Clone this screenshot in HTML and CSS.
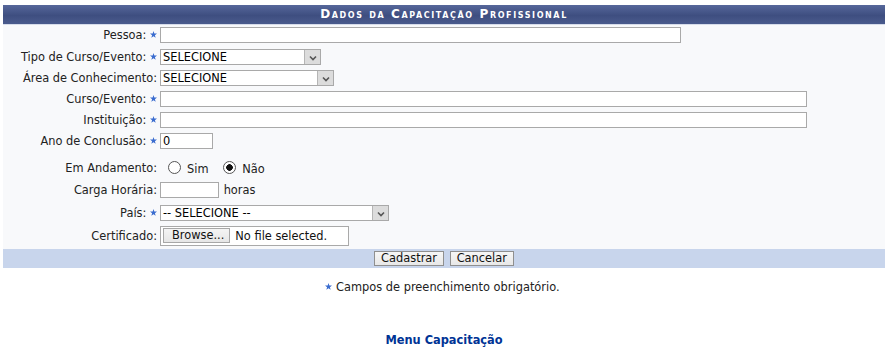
FILE: index.html
```html
<!DOCTYPE html>
<html lang="pt-BR">
<head>
<meta charset="utf-8">
<title>Dados da Capacitação Profissional</title>
<link rel="stylesheet" href="styles.css">
</head>
<body>
<div class="page">
  <table class="formulario">
    <colgroup><col class="c-label"><col></colgroup>
    <thead>
      <tr><th colspan="2" class="titulo">Dados da Capacitação Profissional</th></tr>
    </thead>
    <tbody>
      <tr class="r22">
        <th>Pessoa: <span class="req"><svg viewBox="0 0 10 10" width="7" height="7"><polygon points="5,0 6.2,3.6 10,3.6 7,5.9 8.1,9.6 5,7.4 1.9,9.6 3,5.9 0,3.6 3.8,3.6" fill="#3a6ccf"/></svg></span></th>
        <td><input type="text" class="txt w-pessoa"></td>
      </tr>
      <tr class="r21">
        <th>Tipo de Curso/Evento: <span class="req"><svg viewBox="0 0 10 10" width="7" height="7"><polygon points="5,0 6.2,3.6 10,3.6 7,5.9 8.1,9.6 5,7.4 1.9,9.6 3,5.9 0,3.6 3.8,3.6" fill="#3a6ccf"/></svg></span></th>
        <td><span class="sel w-tipo"><select><option>SELECIONE</option></select><span class="arr"><svg viewBox="0 0 8 6" width="8" height="6"><path d="M1 1.5 L4 4.5 L7 1.5" fill="none" stroke="#555" stroke-width="1.6"/></svg></span></span></td>
      </tr>
      <tr class="r21">
        <th>Área de Conhecimento:</th>
        <td><span class="sel w-area"><select><option>SELECIONE</option></select><span class="arr"><svg viewBox="0 0 8 6" width="8" height="6"><path d="M1 1.5 L4 4.5 L7 1.5" fill="none" stroke="#555" stroke-width="1.6"/></svg></span></span></td>
      </tr>
      <tr class="r21">
        <th>Curso/Evento: <span class="req"><svg viewBox="0 0 10 10" width="7" height="7"><polygon points="5,0 6.2,3.6 10,3.6 7,5.9 8.1,9.6 5,7.4 1.9,9.6 3,5.9 0,3.6 3.8,3.6" fill="#3a6ccf"/></svg></span></th>
        <td><input type="text" class="txt w-curso"></td>
      </tr>
      <tr class="r21">
        <th>Instituição: <span class="req"><svg viewBox="0 0 10 10" width="7" height="7"><polygon points="5,0 6.2,3.6 10,3.6 7,5.9 8.1,9.6 5,7.4 1.9,9.6 3,5.9 0,3.6 3.8,3.6" fill="#3a6ccf"/></svg></span></th>
        <td><input type="text" class="txt w-curso"></td>
      </tr>
      <tr class="r21">
        <th>Ano de Conclusão: <span class="req"><svg viewBox="0 0 10 10" width="7" height="7"><polygon points="5,0 6.2,3.6 10,3.6 7,5.9 8.1,9.6 5,7.4 1.9,9.6 3,5.9 0,3.6 3.8,3.6" fill="#3a6ccf"/></svg></span></th>
        <td><input type="text" class="txt w-ano" value="0"></td>
      </tr>
      <tr class="r-radio">
        <th>Em Andamento:</th>
        <td>
          <label class="opt"><input type="radio" name="and" class="rad"> Sim</label>
          <label class="opt"><input type="radio" name="and" class="rad" checked> Não</label>
        </td>
      </tr>
      <tr class="r22">
        <th>Carga Horária:</th>
        <td><input type="text" class="txt w-carga"> <span class="unid">horas</span></td>
      </tr>
      <tr class="r23">
        <th>País: <span class="req"><svg viewBox="0 0 10 10" width="7" height="7"><polygon points="5,0 6.2,3.6 10,3.6 7,5.9 8.1,9.6 5,7.4 1.9,9.6 3,5.9 0,3.6 3.8,3.6" fill="#3a6ccf"/></svg></span></th>
        <td><span class="sel w-pais"><select><option>-- SELECIONE --</option></select><span class="arr"><svg viewBox="0 0 8 6" width="8" height="6"><path d="M1 1.5 L4 4.5 L7 1.5" fill="none" stroke="#555" stroke-width="1.6"/></svg></span></span></td>
      </tr>
      <tr class="r-file">
        <th>Certificado:</th>
        <td><span class="file"><span class="browse">Browse...</span><span class="nofile">No file selected.</span></span></td>
      </tr>
    </tbody>
    <tfoot>
      <tr>
        <td colspan="2" class="acoes">
          <button type="button" class="btn">Cadastrar</button>
          <button type="button" class="btn">Cancelar</button>
        </td>
      </tr>
    </tfoot>
  </table>

  <p class="obrig"><span class="req"><svg viewBox="0 0 10 10" width="7" height="7"><polygon points="5,0 6.2,3.6 10,3.6 7,5.9 8.1,9.6 5,7.4 1.9,9.6 3,5.9 0,3.6 3.8,3.6" fill="#3a6ccf"/></svg></span> Campos de preenchimento obrigatório.</p>

  <p class="menu"><a href="#">Menu Capacitação</a></p>
</div>
</body>
</html>
```

FILE: styles.css
```css
* { box-sizing: border-box; }

html, body {
  margin: 0;
  padding: 0;
  background: #fff;
}

body {
  font-family: "DejaVu Sans", Verdana, sans-serif;
  font-size: 11.4px;
  color: #222;
}

.page {
  padding: 5px 5px 0 3px;
}

.formulario {
  width: 882px;
  border-collapse: collapse;
  table-layout: fixed;
  background: #f8f9fb;
}

.c-label { width: 156px; }

.titulo {
  height: 19px;
  padding: 0;
  background: linear-gradient(#56679a, #3e4e80 55%, #4a5b8d);
  color: #fff;
  font-weight: bold;
  font-variant: small-caps;
  letter-spacing: 1.6px;
  font-size: 12px;
  text-align: center;
  border-bottom: 1px solid #d6dcea;
}

tbody th {
  font-weight: normal;
  text-align: right;
  padding: 0 2px 0 0;
  white-space: nowrap;
  vertical-align: middle;
}

tbody td {
  padding: 0 0 0 1px;
  vertical-align: middle;
  white-space: nowrap;
}

.r21 { height: 21px; }
.r22 { height: 22px; }
.r23 { height: 23px; }
.r-radio { height: 28px; }
.r-radio th, .r-radio td { padding-top: 5px; }
.r-file { height: 24px; }

.req {
  display: inline-block;
  width: 7px;
  height: 7px;
  line-height: 0;
  vertical-align: 1px;
}

.txt {
  height: 16px;
  border: 1px solid #a9a9a9;
  background: #fff;
  font: 11.4px "DejaVu Sans", Verdana, sans-serif;
  color: #000;
  padding: 0 2px;
  margin: 0;
  vertical-align: middle;
}

.w-pessoa { width: 521px; }
.w-curso { width: 647px; }
.w-ano { width: 53px; }
.w-carga { width: 59px; }

.sel {
  display: inline-flex;
  height: 16px;
  border: 1px solid #a9a9a9;
  background: #fff;
  vertical-align: middle;
}

.sel select {
  appearance: none;
  -webkit-appearance: none;
  border: 0;
  background: transparent;
  flex: 1;
  min-width: 0;
  height: 14px;
  padding: 0 0 0 2px;
  margin: 0;
  font: 11.4px "DejaVu Sans", Verdana, sans-serif;
  color: #000;
  outline: none;
}

.sel .arr {
  width: 16px;
  height: 14px;
  background: #dcdcdc;
  border-left: 1px solid #b5b5b5;
  display: flex;
  align-items: center;
  justify-content: center;
  padding-top: 2px;
}

.w-tipo { width: 161px; }
.w-area { width: 174px; }
.w-pais { width: 229px; }

.opt {
  display: inline-flex;
  align-items: center;
  margin-left: 8px;
  margin-right: 3px;
  padding-top: 3px;
}

.rad {
  appearance: none;
  -webkit-appearance: none;
  width: 13px;
  height: 13px;
  margin: -3px 6px 0 0;
  border: 1px solid #555;
  border-radius: 50%;
  background: #fff;
}

.rad:checked {
  background: radial-gradient(circle, #111 0 3px, #fff 3.6px);
}

.unid { margin-left: 1px; }

.file {
  display: inline-flex;
  align-items: center;
  width: 189px;
  height: 20px;
  border: 1px solid #a9a9a9;
  background: #fff;
  padding-left: 2px;
  vertical-align: middle;
}

.browse {
  display: inline-block;
  height: 15px;
  line-height: 13px;
  padding: 0 5px 0 8px;
  border: 1px solid #a7a7a7;
  background: linear-gradient(#f4f4f4, #e6e6e6);
  color: #111;
}

.nofile {
  margin-left: 5px;
  color: #111;
}

.acoes {
  background: #c8d5ec;
  text-align: center;
  height: 20px;
  padding: 0;
  border-top: 2px solid #f8f9fb;
}

.btn {
  height: 15px;
  padding: 0 6px;
  margin: 0 1px;
  font: 11.4px "DejaVu Sans", Verdana, sans-serif;
  line-height: 13px;
  color: #111;
  background: linear-gradient(#f6f6f6, #e8e8e8);
  border: 1px solid #8f8f8f;
  vertical-align: middle;
}

.obrig {
  margin: 12px 0 0;
  text-align: center;
  padding-right: 3px;
}

.menu {
  margin: 39px 0 0;
  text-align: center;
}

.menu a {
  color: #003395;
  font-weight: bold;
  text-decoration: none;
}
```
